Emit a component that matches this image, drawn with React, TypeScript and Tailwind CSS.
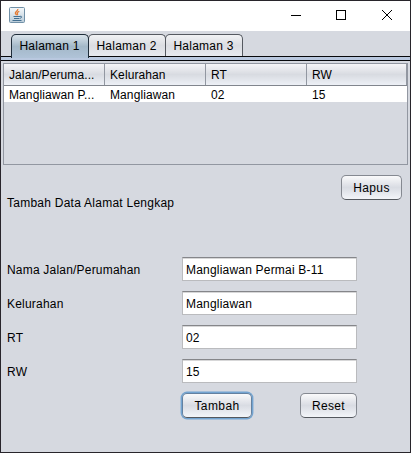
import type { ReactNode } from "react";

const columns = ["Jalan/Peruma...", "Kelurahan", "RT", "RW"];
const row = ["Mangliawan P...", "Mangliawan", "02", "15"];
const fields = [
  { label: "Nama Jalan/Perumahan", value: "Mangliawan Permai B-11" },
  { label: "Kelurahan", value: "Mangliawan" },
  { label: "RT", value: "02" },
  { label: "RW", value: "15" },
];

function JavaIcon() {
  return (
    <svg width="16" height="16" viewBox="0 0 16 16" fill="none">
      <defs>
        <linearGradient id="tile" x1="0" y1="0" x2="0" y2="1">
          <stop stopColor="#f6f9fb" />
          <stop offset="1" stopColor="#b9cbd8" />
        </linearGradient>
      </defs>
      <rect x="0.5" y="0.5" width="15" height="15" rx="1" fill="url(#tile)" stroke="#7190a7" />
      <path d="M8.8 2C9.2 4 5.8 4.5 6.4 6.3C6.6 7 7.4 7.4 7.5 8.3M10.3 4.3C8.2 5.1 7.8 5.8 8.5 6.8C8.8 7.3 8.5 7.8 8.2 8.2" stroke="#e57a32" strokeWidth="1.3" />
      <path d="M4.5 9.5H11M5 11.5H10.5M11 9.3C13.4 8.9 13.2 10.8 11 11.3M3.5 13.5H12.5" stroke="#436f91" strokeWidth="1" />
    </svg>
  );
}

function Tab({ children, active = false, className }: { children: ReactNode; active?: boolean; className: string }) {
  return (
    <button
      className={`-mr-px shrink-0 rounded-t-[5px] border border-b-0 pr-px tracking-[0.23px] ${className} ${
        active
          ? "relative h-6 border-[#1f2d3a] bg-linear-to-b from-[#dbe4eb] via-[#a3b8c8] to-[#b0c3d8] pb-px"
          : "h-[22px] border-[#555960] bg-linear-to-b from-[#f1f2f4] via-[#dbdde2] to-[#e6e9ef] pt-px"
      }`}
    >
      {children}
    </button>
  );
}

function Button({ children, className = "" }: { children: ReactNode; className?: string }) {
  return (
    <button
      className={`rounded-[5px] border border-b-[#54585e] bg-linear-to-b from-[#fafafb] via-[#d9dce3] to-[#f3f5f9] ${className}`}
    >
      {children}
    </button>
  );
}

export default function App() {
  return (
    <div className="flex h-[453px] w-[411px] flex-col overflow-hidden border border-[#28252b] bg-[#d6d9e0] font-['Liberation_Sans',Arial,sans-serif] text-[12px] leading-4 text-black">
      <header className="flex h-[30px] shrink-0 items-center bg-white pb-[2px] pl-2">
        <JavaIcon />
        <svg className="ml-auto mr-[17px]" width="102" height="12" fill="none" stroke="black" shapeRendering="crispEdges">
          <path d="M0 6.5h10M45.5 1.5h9v9h-9z" />
          <path d="M91 1L101 11M101 1L91 11" shapeRendering="auto" />
        </svg>
      </header>
      <nav className="flex h-[25px] shrink-0 items-start pl-[10px] pt-[3px]">
        <Tab active className="w-[78px]">Halaman 1</Tab>
        <Tab className="w-[78px]">Halaman 2</Tab>
        <Tab className="w-[78px]">Halaman 3</Tab>
      </nav>
      <div className="h-[5px] shrink-0 border-y border-[#07080b] bg-[#b9c8df]" />
      <div className="mt-[2px] ml-[2px] h-[102px] w-[405px] shrink-0 border border-[#9297a1]">
        <div className="grid h-[22px] grid-cols-[101px_101px_101px_1fr] border-b border-[#81858d] bg-linear-to-b from-[#f5f5f7] via-[#d8dbe1] to-[#edf0f6]">
          {columns.map((name) => (
            <div key={name} className="border-r border-[#9297a1] pl-[5px] pt-[3px] tracking-[0.1px]">{name}</div>
          ))}
        </div>
        <div className="grid h-4 grid-cols-[101px_101px_101px_1fr] bg-white">
          {row.map((value) => (
            <div key={value} className="pl-[5px] pt-px tracking-[0.1px]">{value}</div>
          ))}
        </div>
      </div>
      <main className="flex flex-col pl-[6px]">
        <div className="flex h-[35px] justify-end pr-2 pt-[10px]">
          <Button className="h-[25px] w-[61px] border-[#858991] tracking-[0.4px]">Hapus</Button>
        </div>
        <h1 className="-mt-[5px] tracking-[0.25px]">Tambah Data Alamat Lengkap</h1>
        <div className="mt-[46px] flex flex-col gap-[10px]">
          {fields.map(({ label, value }) => (
            <label key={label} className="flex h-6 items-center">
              <span className="w-[175px] pt-px tracking-[0.2px]">{label}</span>
              <input
                className="h-6 w-[175px] border border-[#babbbe] border-t-[#85868a] bg-white pl-[3px] pt-px tracking-[0.2px] shadow-[inset_0_1px_0_#d7d7d8] outline-none"
                defaultValue={value}
              />
            </label>
          ))}
        </div>
        <div className="mt-[10px] flex justify-between pl-[175px] pr-[53px]">
          <Button className="h-[25px] w-[70px] border-[#6481a0] tracking-[0.4px] shadow-[0_0_0_1.4px_#73a4d1]">Tambah</Button>
          <Button className="h-[25px] w-[57px] border-[#858991] tracking-[0.3px]">Reset</Button>
        </div>
      </main>
    </div>
  );
}
